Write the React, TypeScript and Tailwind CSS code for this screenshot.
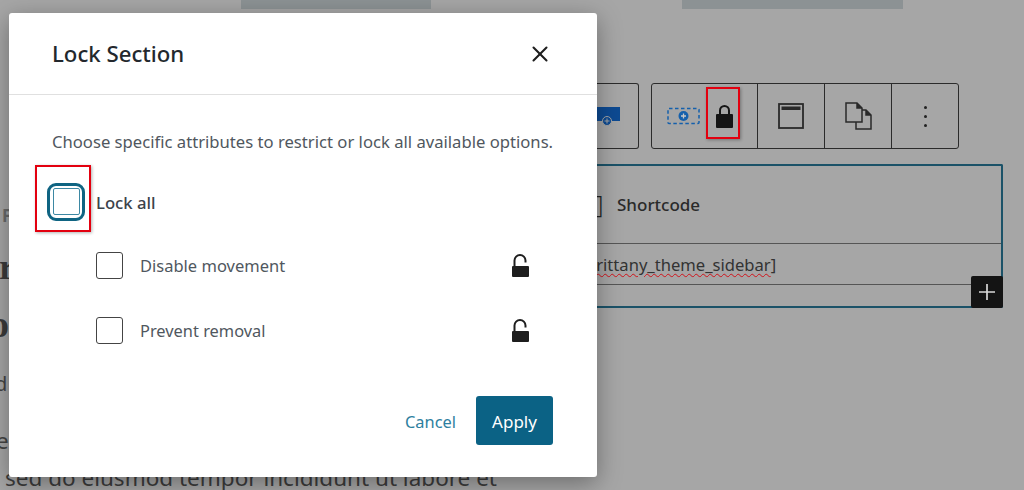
import { X } from "lucide-react";

function LockIcon({ open, className }: { open?: boolean; className?: string }) {
  return (
    <svg viewBox="0 0 17 23" className={className} fill="currentColor">
      {open ? (
        <>
          <path d="M2.5 13V6.5a5.5 5.5 0 0 1 11 0v2" fill="none" stroke="currentColor" strokeWidth="2" />
          <rect x="0" y="12" width="17" height="11" rx="1" />
        </>
      ) : (
        <>
          <path d="M4 10V5.5a4.5 4.5 0 0 1 9 0V10" fill="none" stroke="currentColor" strokeWidth="2" />
          <rect x="0" y="9" width="17" height="14" rx="1" />
        </>
      )}
    </svg>
  );
}

function ToolbarButton({ children }: { children: React.ReactNode }) {
  return <div className="w-[67px] shrink-0 flex items-center justify-center border-l border-[#2b2b2b]">{children}</div>;
}

export default function App() {
  return (
    <div className="relative w-[1024px] h-[490px] overflow-hidden bg-[#a6a6a6] text-[#1c1c1c] flex font-['Noto_Sans',sans-serif]">
      {/* Page behind the overlay */}
      <div className="w-[590px] shrink-0 flex flex-col overflow-hidden">
        <div className="shrink-0 ml-[241px] w-[190px] h-[9px] bg-[#8c9294]" />
        <div className="shrink-0 mt-[195px] pl-[2px] h-[24px] text-[17px] leading-[24px] font-bold text-[#6a6a6a]">F</div>
        <div className="shrink-0 mt-[19px] -ml-[1px] h-[40px] text-[36px] leading-[40px] font-bold font-['Liberation_Serif',serif] text-[#3a3a3a]">r</div>
        <div className="shrink-0 mt-[17px] -ml-[10px] h-[40px] text-[38px] leading-[40px] font-bold font-['Liberation_Serif',serif] text-[#3a3a3a]">o</div>
        <div className="shrink-0 mt-[27px] -ml-[5px] h-[26px] text-[20px] leading-[26px] text-[#444]">d</div>
        <div className="shrink-0 mt-[31px] -ml-[4px] h-[26px] text-[22.5px] leading-[26px] text-[#444]">e</div>
        <div className="shrink-0 mt-[8px] pl-[5px] h-[32px] text-[22.5px] leading-[32px] whitespace-nowrap text-[#3c3c3c]">sed do eiusmod tempor incididunt ut labore et</div>
      </div>

      <div className="flex-1 flex flex-col">
        <div className="ml-[92px] w-[221px] h-[9px] bg-[#8c9294]" />

        {/* Block toolbar */}
        <div className="mt-[74px] flex h-[66px] gap-[12px]">
          <div className="w-[49px] border border-[#2b2b2b] border-l-0 rounded-r-[3px] flex items-center justify-end overflow-hidden">
            <svg viewBox="0 0 24 20" className="w-[24px] h-[20px] text-[#0d4a92] mr-[18px]" fill="currentColor">
              <path d="M0 1h24v14H0z" />
              <circle cx="11" cy="15" r="4.5" stroke="#a6a6a6" strokeWidth="1" />
              <path d="M8.5 15h5M11 12.5v5" stroke="#a6a6a6" strokeWidth="1" />
            </svg>
          </div>
          <div className="w-[308px] border border-[#2b2b2b] rounded-[3px] flex">
            <div className="w-[105px] shrink-0 flex items-center pl-[15px] gap-[16px]">
              <svg viewBox="0 0 33 18" className="w-[33px] h-[18px] text-[#1560ac]">
                <rect x="1" y="1.5" width="31" height="15" rx="1" fill="none" stroke="currentColor" strokeWidth="1.5" strokeDasharray="3.5 2.5" />
                <circle cx="16.5" cy="9" r="5" fill="currentColor" />
                <path d="M14 9h5M16.5 6.5v5" stroke="#c8c8c8" strokeWidth="1.3" />
              </svg>
              <LockIcon className="w-[17px] h-[23px] text-[#151515]" />
            </div>
            <ToolbarButton>
              <svg viewBox="0 0 26 26" className="w-[26px] h-[26px] text-[#2a2a2a]" fill="none">
                <rect x="1" y="1" width="24" height="24" stroke="currentColor" strokeWidth="1.8" />
                <rect x="3.5" y="3.5" width="19" height="3.5" fill="currentColor" />
              </svg>
            </ToolbarButton>
            <ToolbarButton>
              <svg viewBox="0 0 27 28" className="w-[27px] h-[28px] text-[#2a2a2a]" fill="none" stroke="currentColor" strokeWidth="1.5">
                <path d="M1 1h11l5 5v14H1z" />
                <path d="M12 1v5h5" fill="currentColor" />
                <path d="M17 8h4l5 5v14H11v-7" />
                <path d="M21 8v5h5" fill="currentColor" />
              </svg>
            </ToolbarButton>
            <ToolbarButton>
              <div className="flex flex-col gap-[6px]">
                <span className="size-[3px] rounded-full bg-[#222]" />
                <span className="size-[3px] rounded-full bg-[#222]" />
                <span className="size-[3px] rounded-full bg-[#222]" />
              </div>
            </ToolbarButton>
          </div>
        </div>

        {/* Shortcode block */}
        <div className="mt-[15px] w-[413px] h-[144px] border-2 border-[#1b5268] border-l-0 rounded-r-[2px] flex flex-col relative">
          <div className="h-[77px] flex items-center pl-[6px] shrink-0">
            <span className="text-[#222] text-[23px] font-light w-[21px]">]</span>
            <span className="text-[17px] font-medium text-[#2a2a2a]">Shortcode</span>
          </div>
          <div className="h-[42px] border-y border-[#555] flex items-center shrink-0 text-[16.6px] text-[#333] -ml-[4px] pt-[2px]">
            <span className="underline decoration-wavy decoration-[#d0121a] decoration-1 underline-offset-2">brittany_theme_sidebar</span>]
          </div>
          <div className="absolute right-[-2px] bottom-[-2px] size-[32px] bg-[#141414] rounded-[2px] flex items-center justify-center">
            <svg viewBox="0 0 16 16" className="size-[16px]" stroke="#d8d8d8" strokeWidth="1.7">
              <path d="M0 8h16M8 0v16" />
            </svg>
          </div>
        </div>
      </div>

      {/* Annotation on the toolbar lock */}
      <div className="absolute left-[706px] top-[87px] w-[34px] h-[52px] border-2 border-[#e3000f] shadow-[1px_1px_3px_rgba(0,0,0,0.3)]" />

      {/* Modal */}
      <div className="absolute left-[9px] top-[13px] w-[588px] h-[464px] bg-white rounded-[3px] shadow-[0_6px_24px_rgba(0,0,0,0.35)] flex flex-col">
        <div className="h-[82px] shrink-0 border-b border-[#e0e0e0] flex items-center justify-between pl-[43px] pr-[44px]">
          <h1 className="text-[22.2px] font-medium text-[#23282d] pt-[1px]">Lock Section</h1>
          <X className="size-[26px] text-[#1e1e1e]" strokeWidth={1.9} />
        </div>
        <div className="flex-1 flex flex-col px-[43px]">
          <p className="mt-[35px] text-[16.65px] leading-[24px] text-[#50575e] whitespace-nowrap">
            Choose specific attributes to restrict or lock all available options.
          </p>
          <div className="mt-[28px] flex items-center -ml-[5px] h-[39px] mb-[1px]">
            <div className="size-[38px] shrink-0 rounded-[9px] border-[3px] border-[#0f6482] flex items-center justify-center">
              <div className="size-[27px] shrink-0 rounded-[2px] border border-[#3d88a3]" />
            </div>
            <span className="ml-[11px] pt-[2px] text-[16.7px] font-medium text-[#3c434a]">Lock all</span>
          </div>
          <div className="mt-[30px] ml-[44px] flex items-center h-[27px] pr-[25px]">
            <div className="size-[27px] rounded-[3px] border-[1.5px] border-[#444]" />
            <span className="ml-[17px] pt-[2px] text-[16.5px] text-[#50575e]">Disable movement</span>
            <LockIcon open className="ml-auto w-[17px] h-[23px] text-[#1e1e1e]" />
          </div>
          <div className="mt-[38px] ml-[44px] flex items-center h-[27px] pr-[25px]">
            <div className="size-[27px] rounded-[3px] border-[1.5px] border-[#444]" />
            <span className="ml-[17px] pt-[2px] text-[16.4px] text-[#50575e]">Prevent removal</span>
            <LockIcon open className="ml-auto w-[17px] h-[23px] text-[#1e1e1e]" />
          </div>
          <div className="mt-[52px] pr-[1px] flex items-center justify-end gap-[20px]">
            <span className="pt-[4px] text-[16.4px] text-[#2e7fa0]">Cancel</span>
            <button className="w-[77px] h-[49px] pt-[2px] bg-[#0b6285] rounded-[3px] text-white text-[17px]">Apply</button>
          </div>
        </div>
      </div>

      {/* Annotation on the checkbox */}
      <div className="absolute left-[35px] top-[165px] w-[56px] h-[67px] border-2 border-[#e3000f] shadow-[1px_1px_3px_rgba(0,0,0,0.3)]" />
    </div>
  );
}
